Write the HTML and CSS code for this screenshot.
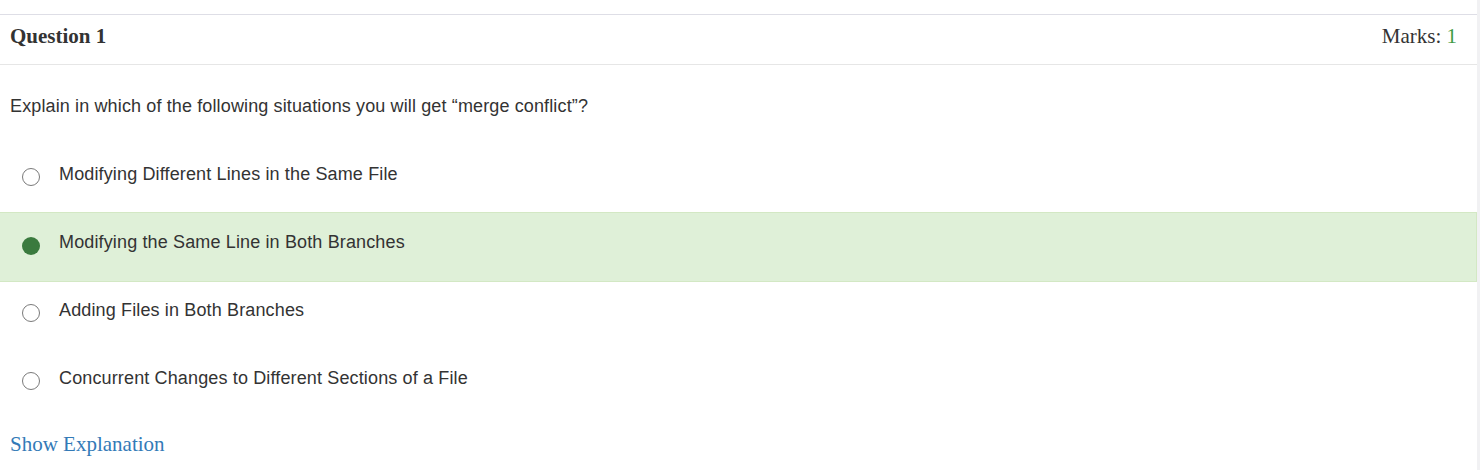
FILE: index.html
```html
<!DOCTYPE html>
<html lang="en">
<head>
<meta charset="utf-8">
<title>Question 1</title>
<link rel="stylesheet" href="styles.css">
</head>
<body>
<div class="page">
  <div class="panel">
    <div class="panel-head">
      <span class="q-title">Question 1</span>
      <span class="marks">Marks: <span class="marks-num">1</span></span>
    </div>
    <div class="panel-body">
      <p class="q-text">Explain in which of the following situations you will get “merge conflict”?</p>
      <ul class="options">
        <li class="option"><span class="radio"></span><span class="opt-label">Modifying Different Lines in the Same File</span></li>
        <li class="option selected"><span class="radio radio-on"></span><span class="opt-label">Modifying the Same Line in Both Branches</span></li>
        <li class="option"><span class="radio"></span><span class="opt-label">Adding Files in Both Branches</span></li>
        <li class="option"><span class="radio"></span><span class="opt-label">Concurrent Changes to Different Sections of a File</span></li>
      </ul>
      <a class="explain" href="#">Show Explanation</a>
    </div>
  </div>
</div>
</body>
</html>
```

FILE: styles.css
```css
html, body {
  margin: 0;
  padding: 0;
  height: 100%;
}
body {
  background: #f1f1f3;
  overflow: hidden;
}
.page {
  width: 1477px;
  height: 100%;
  background: #ffffff;
  padding-top: 14px;
  box-sizing: border-box;
}
.panel {
  border-top: 1px solid #dedee6;
}
.panel-head {
  display: flex;
  justify-content: space-between;
  align-items: flex-start;
  height: 50px;
  box-sizing: border-box;
  padding: 10px 20px 0 10px;
  border-bottom: 1px solid #e6e6e6;
  font-family: "Liberation Serif", "Times New Roman", serif;
  font-size: 21px;
  line-height: 22px;
  color: #333333;
}
.q-title {
  font-weight: bold;
}
.marks-num {
  color: #3f9c46;
}
.panel-body {
  padding: 0;
}
.q-text {
  margin: 28px 0 25px 10px;
  font-family: "Liberation Sans", Arial, sans-serif;
  font-size: 18px;
  line-height: 26px;
  letter-spacing: 0.13px;
  color: #333333;
}
.options {
  list-style: none;
  margin: 0;
  padding: 0;
}
.option {
  display: flex;
  align-items: flex-start;
  height: 68px;
  box-sizing: border-box;
  padding: 16px 0 0 22px;
  border: 1px solid transparent;
  border-left: 0;
  font-family: "Liberation Sans", Arial, sans-serif;
  font-size: 18px;
  line-height: 26px;
  letter-spacing: 0.14px;
  color: #333333;
}
.option.selected {
  height: 70px;
  margin-bottom: -2px;
  background: #dff0d8;
  border-color: #d3e8c4;
}
.radio {
  flex: none;
  width: 18px;
  height: 18px;
  margin-top: 7px;
  margin-right: 19px;
  box-sizing: border-box;
  border: 1.5px solid #7a7a7a;
  border-radius: 50%;
  background: #ffffff;
}
.radio-on {
  border: 0;
  background: #3a7a3e;
  margin-top: 8px;
}
.opt-label {
  display: block;
}
.explain {
  display: inline-block;
  margin: 17px 0 0 10px;
  font-family: "Liberation Serif", "Times New Roman", serif;
  font-size: 21px;
  line-height: 22px;
  color: #337ab7;
  text-decoration: none;
}
```
